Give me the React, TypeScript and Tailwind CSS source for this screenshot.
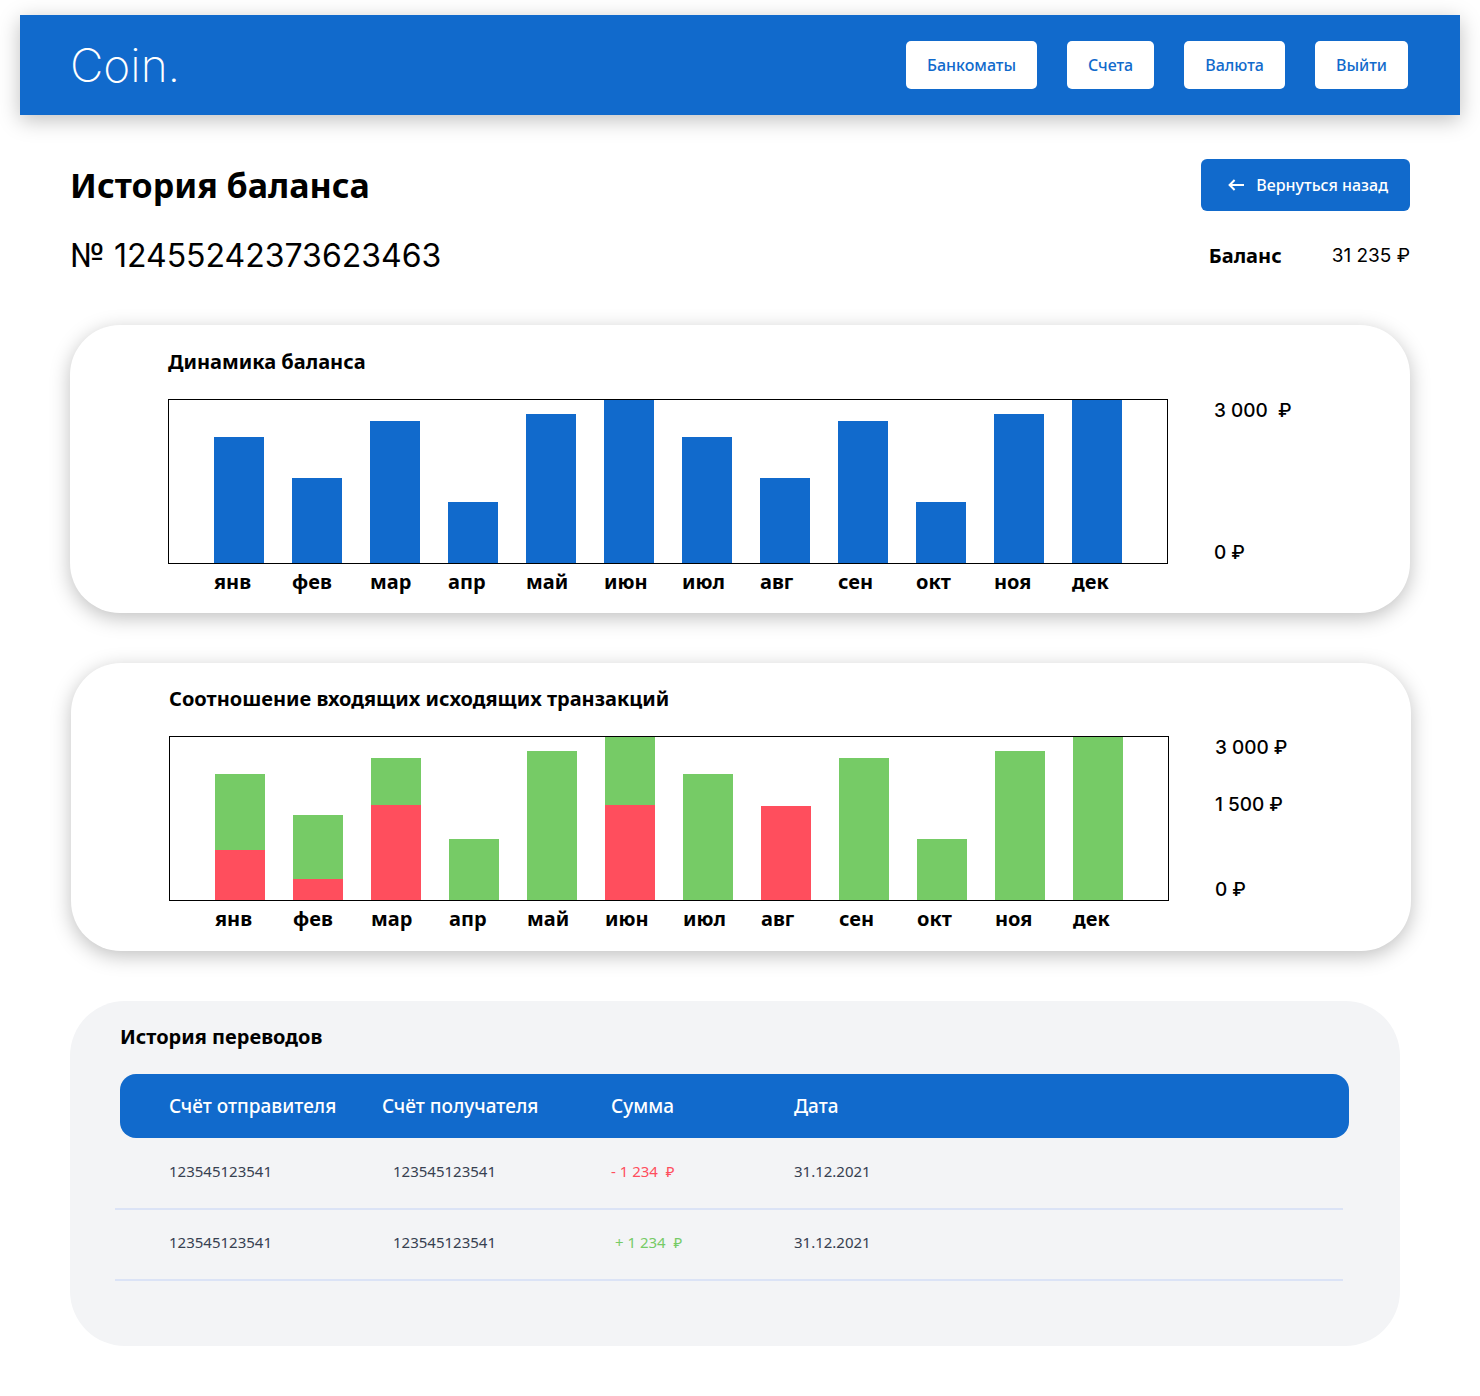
const NAV_LINKS = ["Банкоматы", "Счета", "Валюта", "Выйти"];

type Month = { label: string; total: number; outgoing: number };

// Bar heights are in pixels of the 163px tall plot area.
const MONTHS: Month[] = [
  { label: "янв", total: 126, outgoing: 50 },
  { label: "фев", total: 85, outgoing: 21 },
  { label: "мар", total: 142, outgoing: 95 },
  { label: "апр", total: 61, outgoing: 0 },
  { label: "май", total: 149, outgoing: 0 },
  { label: "июн", total: 163, outgoing: 95 },
  { label: "июл", total: 126, outgoing: 0 },
  { label: "авг", total: 85, outgoing: 94 },
  { label: "сен", total: 142, outgoing: 0 },
  { label: "окт", total: 61, outgoing: 0 },
  { label: "ноя", total: 149, outgoing: 0 },
  { label: "дек", total: 163, outgoing: 0 },
];

const TRANSFERS = [
  { from: "123545123541", to: "123545123541", amount: "- 1 234 \u00a0₽", incoming: false, date: "31.12.2021" },
  { from: "123545123541", to: "123545123541", amount: "+ 1 234 \u00a0₽", incoming: true, date: "31.12.2021" },
];

function ArrowLeft() {
  return (
    <svg width="16" height="12" viewBox="0 0 16 12" fill="none" stroke="currentColor" strokeWidth="2" aria-hidden="true">
      <path d="M16 6H1.8M6.6 1 1.6 6l5 5" />
    </svg>
  );
}

function ChartCard({ title, ticks, split }: { title: string; ticks: string[]; split?: boolean }) {
  return (
    <section
      className={`mt-[50px] h-72 rounded-[50px] bg-white pl-[98px] shadow-[0_5px_20px_rgba(0,0,0,0.25)] ${
        split ? "-mr-px ml-px pt-[23px]" : "pt-6"
      }`}
    >
      <h2 className="text-xl leading-[26px] font-bold">{title}</h2>
      <div className="mt-6 flex gap-[46px]">
        <div className="min-w-0 flex-1">
          <div className="flex h-[165px] items-end justify-between border border-black px-[45px]">
            {MONTHS.map((m) =>
              split ? (
                <div key={m.label} className="flex w-[50px] flex-col">
                  <div className="bg-[#76CB66]" style={{ height: Math.max(m.total - m.outgoing, 0) }} />
                  <div className="bg-[#FF4E5D]" style={{ height: m.outgoing }} />
                </div>
              ) : (
                <div key={m.label} className="w-[50px] bg-[#116ACC]" style={{ height: m.total }} />
              ),
            )}
          </div>
          <div className="mt-1 flex justify-between px-[46px] text-xl leading-7 font-bold">
            {MONTHS.map((m) => (
              <span key={m.label} className="w-[50px]">
                {m.label}
              </span>
            ))}
          </div>
        </div>
        <div className="flex h-[165px] w-[196px] flex-col pt-px font-[Inter] text-[19px] leading-[22px] font-medium whitespace-pre">
          <span>{ticks[0]}</span>
          {ticks.length > 2 && <span className="mt-[35px]">{ticks[1]}</span>}
          <span className="mt-auto">{ticks[ticks.length - 1]}</span>
        </div>
      </div>
    </section>
  );
}

const GRID = "grid grid-cols-[213px_229px_183px_1fr] items-center text-left";

export default function App() {
  return (
    <div className="bg-white px-5 pt-[15px] pb-[50px] font-['Noto_Sans',sans-serif] text-black">
      <header className="flex h-[100px] items-center justify-between bg-[#116ACC] pr-[52px] pl-[50px] shadow-[0_5px_20px_rgba(0,0,0,0.25)]">
        <a href="#" className="font-[Inter] text-[46px] leading-none font-extralight text-white">
          Coin.
        </a>
        <nav className="flex gap-[30px]">
          {NAV_LINKS.map((label) => (
            <a
              key={label}
              href="#"
              className="flex h-12 items-center rounded-[5px] bg-white px-[21px] text-base font-medium text-[#116ACC]"
            >
              {label}
            </a>
          ))}
        </nav>
      </header>

      <main className="px-[50px] pt-11">
        <div className="flex h-[52px] items-center justify-between">
          <h1 className="text-[34px] leading-10 font-bold">История баланса</h1>
          <button
            type="button"
            className="flex h-full items-center gap-3 rounded-md bg-[#116ACC] pr-[22px] pl-[27px] text-base font-medium text-white"
          >
            <ArrowLeft />
            Вернуться назад
          </button>
        </div>

        <div className="mt-[26px] flex h-[38px] items-center justify-between">
          <p className="font-[Inter] text-[32px] font-normal">№ 12455242373623463</p>
          <p className="flex items-center gap-[50px]">
            <span className="text-xl font-bold">Баланс</span>
            <span className="font-[Inter] text-[19px] font-normal">31 235 ₽</span>
          </p>
        </div>

        <ChartCard title="Динамика баланса" ticks={["3 000  ₽", "0 ₽"]} />
        <ChartCard title="Соотношение входящих исходящих транзакций" ticks={["3 000 ₽", "1 500 ₽", "0 ₽"]} split />

        <section className="mt-[50px] mr-[10px] rounded-[55px] bg-gray-100 pt-[23px] pr-[51px] pb-[65px] pl-[50px]">
          <h2 className="text-xl leading-[26px] font-bold">История переводов</h2>
          <table className="mt-6 block">
            <thead className="block rounded-2xl bg-[#116ACC] text-[19px] font-medium text-white">
              <tr className={`${GRID} h-16 pl-[49px]`}>
                <th className="font-medium">Счёт отправителя</th>
                <th className="font-medium">Счёт получателя</th>
                <th className="font-medium">Сумма</th>
                <th className="font-medium">Дата</th>
              </tr>
            </thead>
            <tbody className="mr-[6px] -ml-[5px] block pt-px text-[15px] leading-6 text-[#374151]">
              {TRANSFERS.map((t) => (
                <tr key={t.amount} className={`${GRID} border-b-2 border-[#DBE3F6] pt-5 pb-[25px] pl-[54px]`}>
                  <td>{t.from}</td>
                  <td className="pl-[11px]">{t.to}</td>
                  <td className={t.incoming ? "pl-1 text-[#76CB66]" : "text-[#FF4E5D]"}>{t.amount}</td>
                  <td>{t.date}</td>
                </tr>
              ))}
            </tbody>
          </table>
        </section>
      </main>
    </div>
  );
}
